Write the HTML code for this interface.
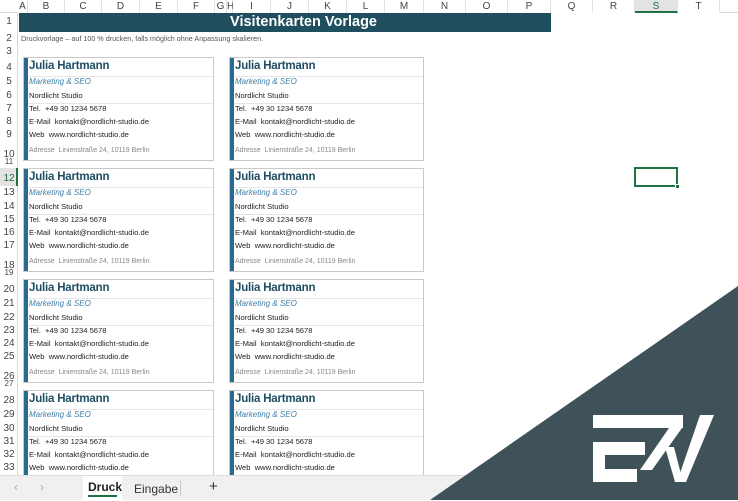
<!DOCTYPE html>
<html><head><meta charset="utf-8"><style>
*{margin:0;padding:0;box-sizing:border-box}
body{width:738px;height:500px;overflow:hidden;background:#fff;font-family:"Liberation Sans",Calibri,sans-serif;position:relative;color:#222}
.ch{position:absolute;top:0;height:13px;font-size:10px;color:#444;text-align:center;line-height:13px;border-right:1px solid #e1e1e1;background:#fff}
.colhead{position:absolute;left:0;top:0;width:738px;height:13px;border-bottom:1px solid #d8d8d8;background:#fff}
.rh{position:absolute;left:0;width:18px;font-size:10px;color:#444;text-align:center}
.rowhead{position:absolute;left:0;top:13px;width:18px;height:462px;background:#fff;border-right:1px solid #d8d8d8}
.title{position:absolute;left:19px;top:13px;width:532px;height:19px;background:#1f4e5f;color:#fff;font-weight:bold;font-size:14.5px;text-align:right;padding-right:174px;line-height:19px}
.note{position:absolute;left:21px;top:34px;font-size:7.2px;color:#555}
.card{position:absolute;width:191px;height:104px;border:1px solid #c9c9c9;background:#fff}
.card .bar{position:absolute;left:0;top:0;width:4px;height:100%;background:#2a6a8e}
.card div.t{position:absolute;left:5px;white-space:nowrap;font-size:7.6px;color:#222}
.card div.n{top:2px;font-size:11.5px;font-weight:bold;color:#1f4e63;letter-spacing:-0.2px}
.card div.r{top:19px;font-style:italic;color:#3d7ea6;font-size:8px}
.card .c{top:33px}
.card .p{top:46px}
.card .e{top:59px}
.card .w{top:72px}
.card div.a{top:89px;font-size:7px;color:#888}
.card .l1{position:absolute;left:4px;right:0;top:18px;border-top:1px solid #e6e6e6}
.card .l2{position:absolute;left:4px;right:0;top:45px;border-top:1px solid #e6e6e6}
.tabs{position:absolute;left:0;top:475px;width:738px;height:25px;background:#f0f0f0;border-top:1px solid #ddd}
</style></head><body>
<div class="colhead"></div>
<div class="ch" style="left:18px;width:10px">A</div>
<div class="ch" style="left:28px;width:37px">B</div>
<div class="ch" style="left:65px;width:37px">C</div>
<div class="ch" style="left:102px;width:38px">D</div>
<div class="ch" style="left:140px;width:38px">E</div>
<div class="ch" style="left:178px;width:37px">F</div>
<div class="ch" style="left:215px;width:12px">G</div>
<div class="ch" style="left:227px;width:6px">H</div>
<div class="ch" style="left:233px;width:38px">I</div>
<div class="ch" style="left:271px;width:38px">J</div>
<div class="ch" style="left:309px;width:38px">K</div>
<div class="ch" style="left:347px;width:38px">L</div>
<div class="ch" style="left:385px;width:39px">M</div>
<div class="ch" style="left:424px;width:42px">N</div>
<div class="ch" style="left:466px;width:42px">O</div>
<div class="ch" style="left:508px;width:43px">P</div>
<div class="ch" style="left:551px;width:42px">Q</div>
<div class="ch" style="left:593px;width:42px">R</div>
<div class="ch" style="left:635px;width:43px;background:#e3e3e3;color:#1f6e43;border-bottom:2px solid #1f7244">S</div>
<div class="ch" style="left:678px;width:42px">T</div>

<div class="rowhead"></div>
<div class="rh" style="top:16px">1</div>
<div class="rh" style="top:33px">2</div>
<div class="rh" style="top:46px">3</div>
<div class="rh" style="top:62px">4</div><div class="rh" style="top:76px">5</div><div class="rh" style="top:90px">6</div><div class="rh" style="top:103px">7</div><div class="rh" style="top:116px">8</div><div class="rh" style="top:129px">9</div><div class="rh" style="top:149px">10</div><div class="rh" style="top:157px;font-size:8px">11</div>
<div style="position:absolute;left:0;top:168px;width:18px;height:18px;background:#e3e3e3;border-right:2px solid #1f7244"></div>
<div class="rh" style="top:173px;color:#1f6e43">12</div><div class="rh" style="top:187px">13</div><div class="rh" style="top:201px">14</div><div class="rh" style="top:214px">15</div><div class="rh" style="top:227px">16</div><div class="rh" style="top:240px">17</div><div class="rh" style="top:260px">18</div><div class="rh" style="top:268px;font-size:8px">19</div>
<div class="rh" style="top:284px">20</div><div class="rh" style="top:298px">21</div><div class="rh" style="top:312px">22</div><div class="rh" style="top:325px">23</div><div class="rh" style="top:338px">24</div><div class="rh" style="top:351px">25</div><div class="rh" style="top:371px">26</div><div class="rh" style="top:379px;font-size:8px">27</div>
<div class="rh" style="top:395px">28</div><div class="rh" style="top:409px">29</div><div class="rh" style="top:423px">30</div><div class="rh" style="top:436px">31</div><div class="rh" style="top:449px">32</div><div class="rh" style="top:462px">33</div>

<div class="title">Visitenkarten Vorlage</div>
<div class="note">Druckvorlage – auf 100 % drucken, falls möglich ohne Anpassung skalieren.</div>

<div class="card" style="left:23px;top:57px"><div class="bar"></div><div class="l1"></div><div class="l2"></div><div class="t n">Julia Hartmann</div><div class="t r">Marketing &amp; SEO</div><div class="t c">Nordlicht Studio</div><div class="t p">Tel.&nbsp; +49 30 1234 5678</div><div class="t e">E-Mail&nbsp; kontakt@nordlicht-studio.de</div><div class="t w">Web&nbsp; www.nordlicht-studio.de</div><div class="t a">Adresse&nbsp; Linienstraße 24, 10119 Berlin</div></div>
<div class="card" style="left:229px;top:57px;width:195px"><div class="bar"></div><div class="l1"></div><div class="l2"></div><div class="t n">Julia Hartmann</div><div class="t r">Marketing &amp; SEO</div><div class="t c">Nordlicht Studio</div><div class="t p">Tel.&nbsp; +49 30 1234 5678</div><div class="t e">E-Mail&nbsp; kontakt@nordlicht-studio.de</div><div class="t w">Web&nbsp; www.nordlicht-studio.de</div><div class="t a">Adresse&nbsp; Linienstraße 24, 10119 Berlin</div></div>

<div class="card" style="left:23px;top:168px"><div class="bar"></div><div class="l1"></div><div class="l2"></div><div class="t n">Julia Hartmann</div><div class="t r">Marketing &amp; SEO</div><div class="t c">Nordlicht Studio</div><div class="t p">Tel.&nbsp; +49 30 1234 5678</div><div class="t e">E-Mail&nbsp; kontakt@nordlicht-studio.de</div><div class="t w">Web&nbsp; www.nordlicht-studio.de</div><div class="t a">Adresse&nbsp; Linienstraße 24, 10119 Berlin</div></div>
<div class="card" style="left:229px;top:168px;width:195px"><div class="bar"></div><div class="l1"></div><div class="l2"></div><div class="t n">Julia Hartmann</div><div class="t r">Marketing &amp; SEO</div><div class="t c">Nordlicht Studio</div><div class="t p">Tel.&nbsp; +49 30 1234 5678</div><div class="t e">E-Mail&nbsp; kontakt@nordlicht-studio.de</div><div class="t w">Web&nbsp; www.nordlicht-studio.de</div><div class="t a">Adresse&nbsp; Linienstraße 24, 10119 Berlin</div></div>

<div class="card" style="left:23px;top:279px"><div class="bar"></div><div class="l1"></div><div class="l2"></div><div class="t n">Julia Hartmann</div><div class="t r">Marketing &amp; SEO</div><div class="t c">Nordlicht Studio</div><div class="t p">Tel.&nbsp; +49 30 1234 5678</div><div class="t e">E-Mail&nbsp; kontakt@nordlicht-studio.de</div><div class="t w">Web&nbsp; www.nordlicht-studio.de</div><div class="t a">Adresse&nbsp; Linienstraße 24, 10119 Berlin</div></div>
<div class="card" style="left:229px;top:279px;width:195px"><div class="bar"></div><div class="l1"></div><div class="l2"></div><div class="t n">Julia Hartmann</div><div class="t r">Marketing &amp; SEO</div><div class="t c">Nordlicht Studio</div><div class="t p">Tel.&nbsp; +49 30 1234 5678</div><div class="t e">E-Mail&nbsp; kontakt@nordlicht-studio.de</div><div class="t w">Web&nbsp; www.nordlicht-studio.de</div><div class="t a">Adresse&nbsp; Linienstraße 24, 10119 Berlin</div></div>

<div class="card" style="left:23px;top:390px"><div class="bar"></div><div class="l1"></div><div class="l2"></div><div class="t n">Julia Hartmann</div><div class="t r">Marketing &amp; SEO</div><div class="t c">Nordlicht Studio</div><div class="t p">Tel.&nbsp; +49 30 1234 5678</div><div class="t e">E-Mail&nbsp; kontakt@nordlicht-studio.de</div><div class="t w">Web&nbsp; www.nordlicht-studio.de</div></div>
<div class="card" style="left:229px;top:390px;width:195px"><div class="bar"></div><div class="l1"></div><div class="l2"></div><div class="t n">Julia Hartmann</div><div class="t r">Marketing &amp; SEO</div><div class="t c">Nordlicht Studio</div><div class="t p">Tel.&nbsp; +49 30 1234 5678</div><div class="t e">E-Mail&nbsp; kontakt@nordlicht-studio.de</div><div class="t w">Web&nbsp; www.nordlicht-studio.de</div></div>

<div style="position:absolute;left:634px;top:167px;width:44px;height:20px;border:2px solid #1f7244"></div>
<div style="position:absolute;left:675px;top:184px;width:5px;height:5px;background:#1f7244;border:1px solid #fff"></div>

<div class="tabs">
<div style="position:absolute;left:14px;top:4px;font-size:12px;color:#aaa">&lsaquo;</div>
<div style="position:absolute;left:40px;top:4px;font-size:12px;color:#aaa">&rsaquo;</div>
<div style="position:absolute;left:83px;top:0;width:39px;height:25px;background:#fff"></div>
<div style="position:absolute;left:88px;top:4px;font-size:12px;font-weight:bold;color:#222">Druck</div>
<div style="position:absolute;left:88px;top:19px;width:29px;height:2px;background:#1f7244"></div>
<div style="position:absolute;left:134px;top:6px;font-size:12px;color:#333">Eingabe</div>
<div style="position:absolute;left:180px;top:4px;width:1px;height:16px;background:#ccc"></div>
<div style="position:absolute;left:209px;top:2px;font-size:15px;color:#333">+</div>
</div>

<svg style="position:absolute;left:0;top:0" width="738" height="500">
<polygon points="738,286 738,500 430,500" fill="#3f5259"/>
<g fill="#fff">
<rect x="593" y="415" width="90" height="13"/>
<rect x="593" y="442" width="12" height="40"/>
<rect x="593" y="442" width="52" height="13"/>
<rect x="593" y="469" width="44" height="13"/>
<polygon points="669,428 682,428 652,470 640,470"/>
<polygon points="665,447 674,447 683,482 675,482"/>
<polygon points="700,415 714,415 686,482 677,482"/>
</g>
</svg>
</body></html>
